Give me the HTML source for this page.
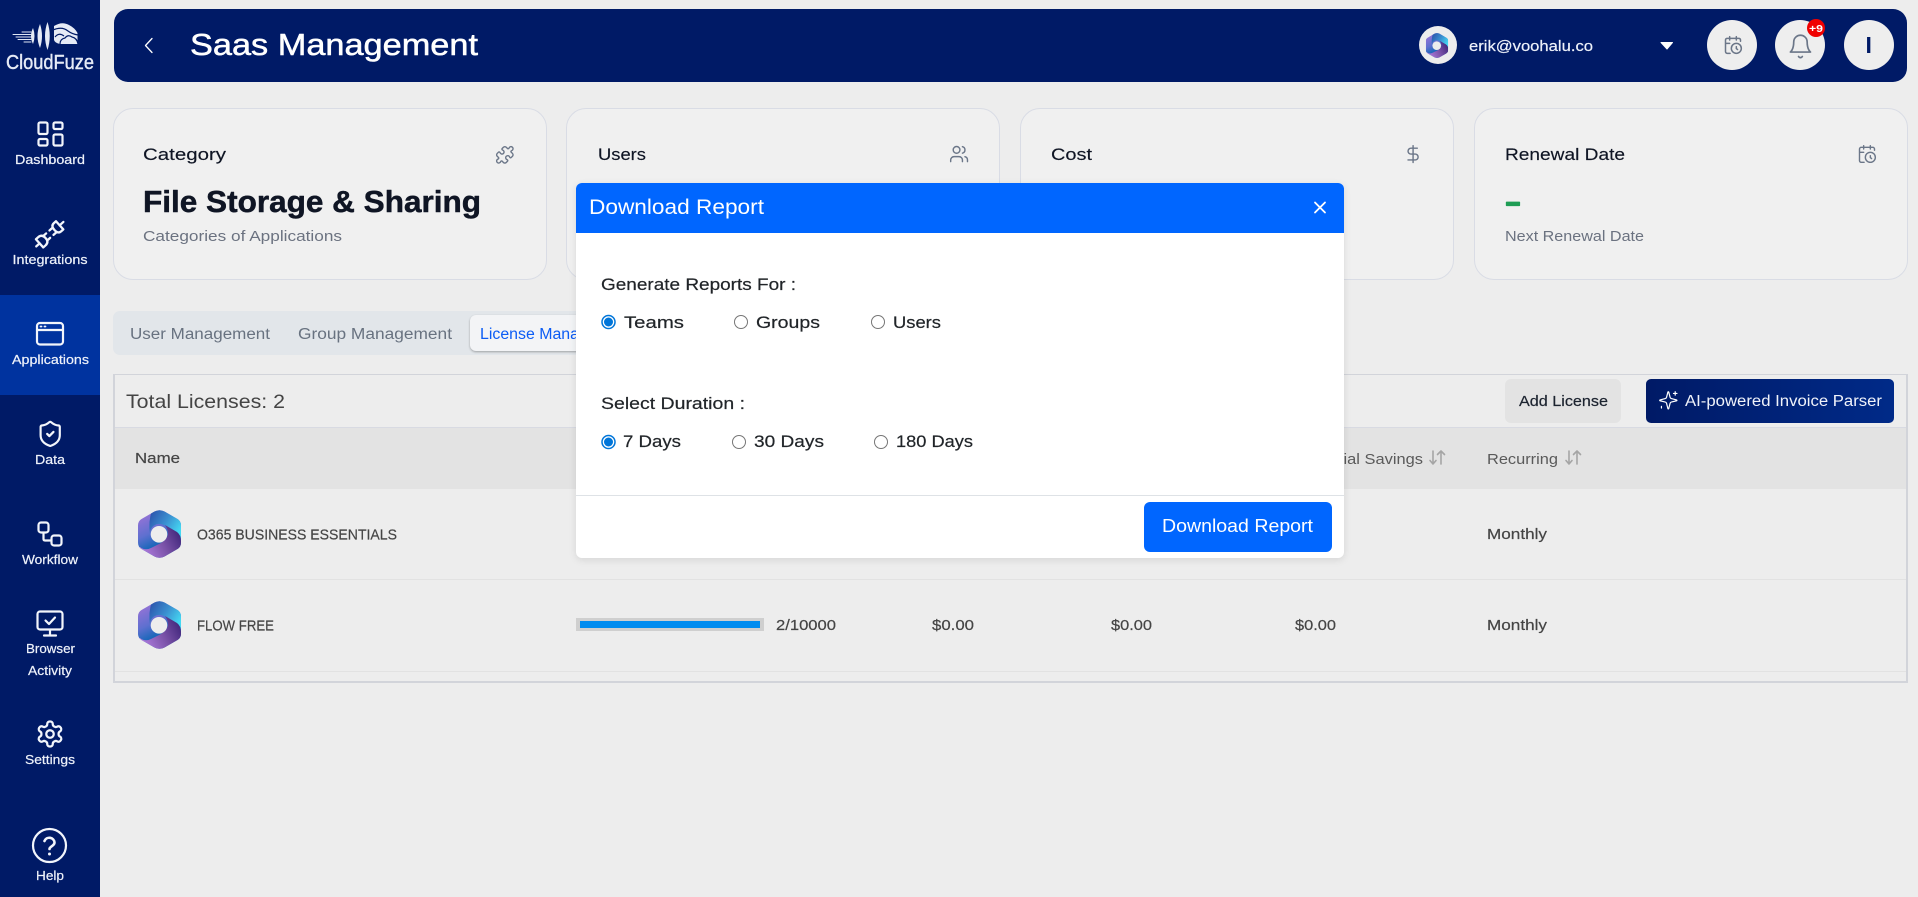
<!DOCTYPE html>
<html lang="en"><head><meta charset="utf-8"><title>Saas Management</title>
<style>
html,body{margin:0;padding:0;width:1918px;height:897px;overflow:hidden;background:#ededed}
body{position:relative;font-family:"Liberation Sans",sans-serif}
.b{position:absolute;box-sizing:border-box}
.card{top:108px;height:172px;width:434px;background:#f0f0f0;border:1px solid #d9dce5;border-radius:20px}
svg{position:absolute;left:0;top:0;overflow:visible}
text{font-family:"Liberation Sans",sans-serif;stroke-linejoin:round}
.i{fill:none;stroke-linecap:round;stroke-linejoin:round}
.t{stroke-width:.2px}
</style></head><body>
<svg width="0" height="0" style="position:absolute">
<defs>
<linearGradient id="g1" x1="0" y1="0" x2=".45" y2="1"><stop offset="0" stop-color="#a873d8"/><stop offset=".5" stop-color="#5f70d0"/><stop offset=".78" stop-color="#1567b8"/><stop offset="1" stop-color="#1567b8"/></linearGradient>
<linearGradient id="g2" x1="0" y1="0" x2="1" y2=".6"><stop offset="0" stop-color="#2a4da8"/><stop offset=".55" stop-color="#3a8fd0"/><stop offset="1" stop-color="#45d8f2"/></linearGradient>
<linearGradient id="g3" x1="0" y1=".7" x2="1" y2=".3"><stop offset="0" stop-color="#b380e2"/><stop offset=".55" stop-color="#7a52a8"/><stop offset="1" stop-color="#41277c"/></linearGradient>
<clipPath id="hx"><path d="M16.500 1.500Q21.500-1 26.500 1.500L39.500 9Q43 11 43 15.500V32.500Q43 37 39.500 39L26.500 46.500Q21.500 49 16.500 46.500L3.500 39Q0 37 0 32.500V15.500Q0 11 3.500 9Z"/></clipPath>
<symbol id="ms" viewBox="0 0 43 48" overflow="visible">
<g clip-path="url(#hx)">
<rect x="0" y="0" width="43" height="48" fill="url(#g1)"/>
<path d="M14 0H43V31Q43 25 38 22L28 16Q21 12 16 15.500 12 18 12 24 10 12 14 0Z" fill="url(#g2)"/>
<path d="M2 37Q7 41 13 38L22 33.500Q29 30 30 24 30 19 27 15L39 22Q43 25 43 31V48H0V37Z" fill="url(#g3)"/>
</g>
<circle cx="21" cy="24.300" r="8.300" fill="#ededed"/>
</symbol>
<symbol id="cal" viewBox="0 0 24 24" overflow="visible"><path d="M21 7.500V6a2 2 0 0 0-2-2H5a2 2 0 0 0-2 2v14a2 2 0 0 0 2 2h3.500M16 2v4M8 2v4M3 10h5M17.500 17.500 16 16.300V14"/><circle cx="16" cy="16" r="6"/></symbol>
</defs></svg>

<!-- sidebar -->
<div class="b" style="left:0;top:0;width:100px;height:897px;background:#001a66"></div>
<div class="b" style="left:0;top:295px;width:100px;height:100px;background:#00339f"></div>
<!-- header -->
<div class="b" style="left:114px;top:9px;width:1793px;height:73px;background:#001a66;border-radius:14px"></div>
<div class="b" style="left:1419px;top:26px;width:38px;height:38px;border-radius:50%;background:#ededed"></div>
<div class="b" style="left:1707px;top:20px;width:50px;height:50px;border-radius:50%;background:#eeeeee"></div>
<div class="b" style="left:1775px;top:20px;width:50px;height:50px;border-radius:50%;background:#eeeeee"></div>
<div class="b" style="left:1844px;top:20px;width:50px;height:50px;border-radius:50%;background:#eeeeee"></div>
<div class="b" style="left:1807px;top:19px;width:18px;height:18px;border-radius:50%;background:#f00000"></div>
<!-- cards -->
<div class="b card" style="left:113px"></div>
<div class="b card" style="left:566px"></div>
<div class="b card" style="left:1020px"></div>
<div class="b card" style="left:1474px"></div>
<!-- tabs -->
<div class="b" style="left:113px;top:311px;width:500px;height:44px;background:#e2e6ea;border-radius:7px"></div>
<div class="b" style="left:470px;top:315px;width:170px;height:36px;background:#f3f4f6;border-radius:6px;box-shadow:0 1px 2px rgba(0,0,0,.3)"></div>
<!-- table -->
<div class="b" style="left:113px;top:374px;width:1795px;height:309px;border:2px solid #d2d4da;border-top-width:1px;border-bottom-width:2px;background:#ededed"></div>
<div class="b" style="left:115px;top:427px;width:1791px;height:62px;background:#e3e3e3;border-top:1px solid #d8dae2"></div>
<div class="b" style="left:115px;top:579px;width:1791px;height:1px;background:#e2e2e2"></div>
<div class="b" style="left:115px;top:671px;width:1791px;height:1px;background:#e2e2e2"></div>
<div class="b" style="left:1505px;top:379px;width:116px;height:44px;background:#e3e3e3;border-radius:6px"></div>
<div class="b" style="left:1646px;top:379px;width:248px;height:44px;background:linear-gradient(90deg,#001a66,#002a88);border-radius:5px"></div>
<div class="b" style="left:576px;top:618px;width:188px;height:13px;background:#cfcfcf"></div>
<div class="b" style="left:580px;top:621px;width:180px;height:7px;background:#008cf0"></div>

<svg width="1918" height="897" viewBox="0 0 1918 897">
<!-- logo -->
<g fill="none" stroke="#dfe6f4" stroke-linecap="round" stroke-width="1">
<path d="M13 34.500H31M16 37H31M18 39.500H31M22 32H31M24 42H31"/>
</g>
<g fill="#e6ebf6">
<path d="M33 28Q29 36 33 44 36 36 33 28Z"/>
<path d="M40 24Q35 36 40 48 44 36 40 24Z"/>
<path d="M47.500 22Q42.500 36 47.500 50 52 36 47.500 22Z"/>
<path d="M54 26Q62 21 69 25 75 28 77.500 33V44H60Q55 43 54 40Z"/>
</g>
<g fill="none" stroke="#001a66" stroke-width="1.200">
<path d="M53 30Q62 26 68 31 72 34 78 35"/>
<path d="M55 37Q59 32 64 36"/>
<path d="M60 44Q60 39 65 38 68 34 72 37 77 38 78 44"/>
</g>
<text x="6" y="69" font-size="20" fill="#e6ebf6" stroke="#e6ebf6" stroke-width=".4" textLength="88" lengthAdjust="spacingAndGlyphs">CloudFuze</text>

<!-- sidebar icons -->
<g class="i" stroke="#f2f5fb" stroke-width="2.200">
<rect x="38.500" y="122.500" width="9" height="11.500" rx="1.500"/><rect x="53.500" y="122.500" width="9" height="6.500" rx="1.500"/><rect x="38.500" y="139" width="9" height="6.500" rx="1.500"/><rect x="53.500" y="134.500" width="9" height="11" rx="1.500"/>
<!-- plug -->
<g stroke-width="2.300" transform="rotate(-42 50 234)">
<path d="M31.500 234H36"/>
<path d="M36 228.500H39Q44 228.500 44 234 44 239.500 39 239.500H36Z"/>
<path d="M44 231H47.500M44 237H47.500"/>
<path d="M52 231H56M52 237H56"/>
<path d="M63 228.500H60Q56 228.500 56 234 56 239.500 60 239.500H63Z"/>
<path d="M63 234H68"/>
</g>
<!-- apps -->
<rect x="37" y="323" width="26" height="21.500" rx="3"/><path d="M37 330H63"/>
<path d="M40.500 326.500h1M44.500 326.500h1" stroke-width="1.800"/>
<g transform="translate(35.800 419.500) scale(1.200)" stroke-width="1.800"><path d="M20 13c0 5-3.500 7.500-7.660 8.950a1 1 0 0 1-.67-.01C7.500 20.500 4 18 4 13V6a1 1 0 0 1 1-1c2 0 4.500-1.200 6.240-2.720a1.170 1.170 0 0 1 1.520 0C14.510 3.810 17 5 19 5a1 1 0 0 1 1 1z"/><path d="m9.500 12 1.800 1.800 3.400-3.400" stroke-width="1.900"/></g>
<!-- workflow -->
<rect x="38.500" y="522.500" width="10" height="10" rx="2.500"/><rect x="51.500" y="535.500" width="10" height="10" rx="2.500"/><path d="M43.500 533V539Q43.500 540.500 45 540.500H51"/>
<!-- monitor -->
<rect x="37.500" y="611.500" width="25" height="18" rx="2.500"/><path d="M50 630V635.500M44 635.500H56"/><path d="M45.500 620.500 49 624 55 617.500"/>
<g transform="translate(35 719) scale(1.250)" stroke-width="1.800"><path d="M12.220 2h-.44a2 2 0 0 0-2 2v.18a2 2 0 0 1-1 1.730l-.43.25a2 2 0 0 1-2 0l-.15-.08a2 2 0 0 0-2.730.73l-.22.38a2 2 0 0 0 .73 2.730l.15.1a2 2 0 0 1 1 1.720v.51a2 2 0 0 1-1 1.740l-.15.09a2 2 0 0 0-.73 2.730l.22.38a2 2 0 0 0 2.730.73l.15-.08a2 2 0 0 1 2 0l.43.25a2 2 0 0 1 1 1.730V20a2 2 0 0 0 2 2h.44a2 2 0 0 0 2-2v-.18a2 2 0 0 1 1-1.730l.43-.25a2 2 0 0 1 2 0l.15.08a2 2 0 0 0 2.730-.73l.22-.39a2 2 0 0 0-.73-2.730l-.15-.08a2 2 0 0 1-1-1.740v-.5a2 2 0 0 1 1-1.740l.15-.09a2 2 0 0 0 .73-2.730l-.22-.38a2 2 0 0 0-2.730-.73l-.15.08a2 2 0 0 1-2 0l-.43-.25a2 2 0 0 1-1-1.730V4a2 2 0 0 0-2-2z"/><circle cx="12" cy="12" r="3"/></g>
<circle cx="49.500" cy="845.500" r="16.500"/><path d="M44.500 841a5.200 5.200 0 0 1 10 1.500c0 3.500-5 4-5 6.500" stroke-width="2.600"/><path d="M49.500 854h.01" stroke-width="3"/>
</g>
<g fill="#eef2fa" stroke="#eef2fa" class="t" font-size="13">
<text x="15" y="164" textLength="70" lengthAdjust="spacingAndGlyphs">Dashboard</text>
<text x="12.500" y="264" textLength="75" lengthAdjust="spacingAndGlyphs">Integrations</text>
<text x="12" y="364" textLength="77" lengthAdjust="spacingAndGlyphs">Applications</text>
<text x="35" y="464" textLength="30" lengthAdjust="spacingAndGlyphs">Data</text>
<text x="22" y="564" textLength="56" lengthAdjust="spacingAndGlyphs">Workflow</text>
<text x="26" y="653" textLength="49" lengthAdjust="spacingAndGlyphs">Browser</text>
<text x="28" y="675" textLength="44" lengthAdjust="spacingAndGlyphs">Activity</text>
<text x="25" y="764" textLength="50" lengthAdjust="spacingAndGlyphs">Settings</text>
<text x="36" y="880" textLength="28" lengthAdjust="spacingAndGlyphs">Help</text>
</g>

<!-- header -->
<path class="i" d="M152 38.500 145.500 45.500 152 52.500" stroke="#fff" stroke-width="1.300"/>
<text x="190" y="55" font-size="31" fill="#fff" stroke="#fff" stroke-width=".5" textLength="288" lengthAdjust="spacingAndGlyphs">Saas Management</text>
<use href="#ms" x="1425" y="33" width="24" height="25"/>
<text x="1469" y="51" font-size="15" fill="#eef2fa" stroke="#eef2fa" class="t" textLength="124" lengthAdjust="spacingAndGlyphs">erik@voohalu.co</text>
<path d="M1661 42.500H1672.500L1667 49Z" fill="#fff" stroke="#fff" stroke-linejoin="round"/>
<use href="#cal" x="1723" y="35" width="20" height="20" class="i" stroke="#6b7688" stroke-width="1.800"/>
<g class="i" stroke="#6b7688" stroke-width="1.500" transform="translate(1787 33) scale(1.120)"><path d="M6 8a6 6 0 0 1 12 0c0 7 3 9 3 9H3s3-2 3-9M10.300 21a1.940 1.940 0 0 0 3.400 0"/></g>
<text x="1809" y="32" font-size="10" font-weight="bold" fill="#fff" textLength="14" lengthAdjust="spacingAndGlyphs">+9</text>
<text x="1865.500" y="53" font-size="23" fill="#001a66" font-weight="bold">I</text>

<!-- cards -->
<g fill="#0f1524" stroke="#0f1524" stroke-width=".15" font-size="17">
<text x="143" y="160" textLength="83" lengthAdjust="spacingAndGlyphs">Category</text>
<text x="598" y="160" textLength="48" lengthAdjust="spacingAndGlyphs">Users</text>
<text x="1051" y="160" textLength="41" lengthAdjust="spacingAndGlyphs">Cost</text>
<text x="1505" y="160" textLength="120" lengthAdjust="spacingAndGlyphs">Renewal Date</text>
</g>
<text x="143" y="212" font-size="31" font-weight="bold" fill="#0f1524" stroke="#0f1524" stroke-width=".5" textLength="338" lengthAdjust="spacingAndGlyphs">File Storage &amp; Sharing</text>
<g fill="#6b7280" font-size="15">
<text x="143" y="241" textLength="199" lengthAdjust="spacingAndGlyphs">Categories of Applications</text>
<text x="1505" y="241" textLength="139" lengthAdjust="spacingAndGlyphs">Next Renewal Date</text>
</g>
<text x="1505" y="211" font-size="28" font-weight="bold" fill="#1f9d55" stroke="#1f9d55" stroke-width="1.200" textLength="16" lengthAdjust="spacingAndGlyphs">-</text>
<g class="i" stroke="#6b7688" stroke-width="1.700">
<g transform="translate(495 145) scale(.82)"><path d="M19.439 7.850c-.049.322.059.648.289.878l1.568 1.568c.47.47.706 1.087.706 1.704s-.235 1.233-.706 1.704l-1.611 1.611a.98.98 0 0 1-.837.276c-.47-.07-.802-.48-.968-.925a2.501 2.501 0 1 0-3.214 3.214c.446.166.855.497.925.968a.979.979 0 0 1-.276.837l-1.610 1.610a2.404 2.404 0 0 1-1.705.707 2.402 2.402 0 0 1-1.704-.706l-1.568-1.568a1.026 1.026 0 0 0-.877-.29c-.493.074-.84.504-1.020.968a2.500 2.500 0 1 1-3.237-3.237c.464-.18.894-.527.967-1.020a1.026 1.026 0 0 0-.289-.877l-1.568-1.568A2.402 2.402 0 0 1 1.998 12c0-.617.236-1.234.706-1.704L4.230 8.770c.24-.24.581-.353.917-.303.515.077.877.528 1.073 1.010a2.500 2.500 0 1 0 3.259-3.259c-.482-.196-.933-.558-1.010-1.073-.05-.336.062-.676.303-.917l1.525-1.525A2.402 2.402 0 0 1 12 1.998c.617 0 1.234.236 1.704.706l1.568 1.568c.23.23.556.338.877.29.493-.074.84-.504 1.020-.968a2.500 2.500 0 1 1 3.237 3.237c-.464.18-.894.527-.967 1.020Z"/></g>
<g transform="translate(949 144) scale(.84)"><path d="M16 21v-2a4 4 0 0 0-4-4H6a4 4 0 0 0-4 4v2M22 21v-2a4 4 0 0 0-3-3.870M16 3.130a4 4 0 0 1 0 7.750"/><circle cx="9" cy="7" r="4"/></g>
<g transform="translate(1403 144) scale(.84)"><path d="M12 2v20M17 5H9.500a3.500 3.500 0 0 0 0 7h5a3.500 3.500 0 0 1 0 7H6"/></g>
<use href="#cal" x="1857" y="144" width="20" height="20"/>
</g>

<!-- tabs -->
<g font-size="15.500" fill="#687280">
<text x="130" y="339" textLength="140" lengthAdjust="spacingAndGlyphs">User Management</text>
<text x="298" y="339" textLength="154" lengthAdjust="spacingAndGlyphs">Group Management</text>
<text x="480" y="339" fill="#0b5cf5" textLength="152" lengthAdjust="spacingAndGlyphs">License Management</text>
</g>

<!-- table -->
<text x="126" y="408" font-size="19.500" fill="#444" textLength="159" lengthAdjust="spacingAndGlyphs">Total Licenses: 2</text>
<text x="1519" y="406" font-size="15" fill="#1d2430" stroke="#1d2430" class="t" textLength="89" lengthAdjust="spacingAndGlyphs">Add License</text>
<path class="i" stroke="#fff" stroke-width="1.400" transform="translate(1658 390) scale(.86)" d="M9.937 15.500A2 2 0 0 0 8.500 14.063l-6.135-1.582a.5.5 0 0 1 0-.962L8.500 9.936A2 2 0 0 0 9.937 8.500l1.582-6.135a.5.5 0 0 1 .963 0L14.063 8.500A2 2 0 0 0 15.500 9.937l6.135 1.581a.5.5 0 0 1 0 .964L15.500 14.063a2 2 0 0 0-1.437 1.437l-1.582 6.135a.5.5 0 0 1-.963 0zM20 2v4M22 4h-4M4 19v2"/>
<text x="1685" y="406" font-size="15.500" fill="#f0f3fa" textLength="197" lengthAdjust="spacingAndGlyphs">AI-powered Invoice Parser</text>
<g font-size="15" fill="#454545" stroke="#454545" class="t">
<text x="135" y="463" textLength="45" lengthAdjust="spacingAndGlyphs">Name</text>
<text x="1296" y="464" textLength="127" lengthAdjust="spacingAndGlyphs" fill="#5a5a5a" stroke="none">Potential Savings</text>
<text x="1487" y="464" textLength="71" lengthAdjust="spacingAndGlyphs" fill="#5a5a5a" stroke="none">Recurring</text>
<text x="197" y="539.500" textLength="200" lengthAdjust="spacingAndGlyphs">O365 BUSINESS ESSENTIALS</text>
<text x="197" y="630.500" textLength="77" lengthAdjust="spacingAndGlyphs">FLOW FREE</text>
<text x="776" y="630" textLength="60" lengthAdjust="spacingAndGlyphs">2/10000</text>
<text x="932" y="630" textLength="42" lengthAdjust="spacingAndGlyphs">$0.00</text>
<text x="1111" y="630" textLength="41" lengthAdjust="spacingAndGlyphs">$0.00</text>
<text x="1295" y="630" textLength="41" lengthAdjust="spacingAndGlyphs">$0.00</text>
<text x="1487" y="539" textLength="60" lengthAdjust="spacingAndGlyphs">Monthly</text>
<text x="1487" y="630" textLength="60" lengthAdjust="spacingAndGlyphs">Monthly</text>
</g>
<g class="i" stroke="#a5a5a5" stroke-width="1.600">
<path d="M1433 451V464M1430 460.500 1433 464 1436 460.500M1441 464V451M1437.500 454.500 1441 451 1444.500 454.500"/>
<path d="M1569 451V464M1566 460.500 1569 464 1572 460.500M1577 464V451M1573.500 454.500 1577 451 1580.500 454.500"/>
</g>
<use href="#ms" x="138" y="510" width="43" height="48"/>
<use href="#ms" x="138" y="601" width="43" height="48"/>
</svg>

<!-- modal -->
<div class="b" style="left:576px;top:183px;width:768px;height:375px;background:#fff;border-radius:6px;box-shadow:0 2px 8px rgba(0,0,0,.1)"></div>
<div class="b" style="left:576px;top:183px;width:768px;height:50px;background:#0066ff;border-radius:6px 6px 0 0"></div>
<div class="b" style="left:576px;top:495px;width:768px;height:1px;background:#dee2e6"></div>
<div class="b" style="left:1144px;top:502px;width:188px;height:50px;background:#0066ff;border-radius:6px"></div>
<svg width="1918" height="897" viewBox="0 0 1918 897">
<text x="589" y="214" font-size="21" fill="#fff" textLength="175" lengthAdjust="spacingAndGlyphs">Download Report</text>
<path d="M1315 202.500 1325 212.500M1325 202.500 1315 212.500" stroke="#fff" stroke-width="1.800" stroke-linecap="round"/>
<g font-size="17" fill="#212529" stroke="#212529" class="t">
<text x="601" y="290" textLength="195" lengthAdjust="spacingAndGlyphs">Generate Reports For :</text>
<text x="624" y="328" textLength="60" lengthAdjust="spacingAndGlyphs">Teams</text>
<text x="756" y="328" textLength="64" lengthAdjust="spacingAndGlyphs">Groups</text>
<text x="893" y="328" textLength="48" lengthAdjust="spacingAndGlyphs">Users</text>
<text x="601" y="409" textLength="144" lengthAdjust="spacingAndGlyphs">Select Duration :</text>
<text x="623" y="447" textLength="58" lengthAdjust="spacingAndGlyphs">7 Days</text>
<text x="754" y="447" textLength="70" lengthAdjust="spacingAndGlyphs">30 Days</text>
<text x="896" y="447" textLength="77" lengthAdjust="spacingAndGlyphs">180 Days</text>
</g>
<g fill="#fff" stroke="#767676" stroke-width="1">
<circle cx="741" cy="322" r="6.500"/><circle cx="878" cy="322" r="6.500"/><circle cx="739" cy="442" r="6.500"/><circle cx="881" cy="442" r="6.500"/>
</g>
<g fill="#fff" stroke="#0075d9" stroke-width="1.500">
<circle cx="608.500" cy="322" r="6.500"/><circle cx="608.500" cy="442" r="6.500"/>
</g>
<circle cx="608.500" cy="322" r="4.500" fill="#0075d9"/><circle cx="608.500" cy="442" r="4.500" fill="#0075d9"/>
<text x="1162" y="532" font-size="18.500" fill="#fff" textLength="151" lengthAdjust="spacingAndGlyphs">Download Report</text>
</svg>
</body></html>
